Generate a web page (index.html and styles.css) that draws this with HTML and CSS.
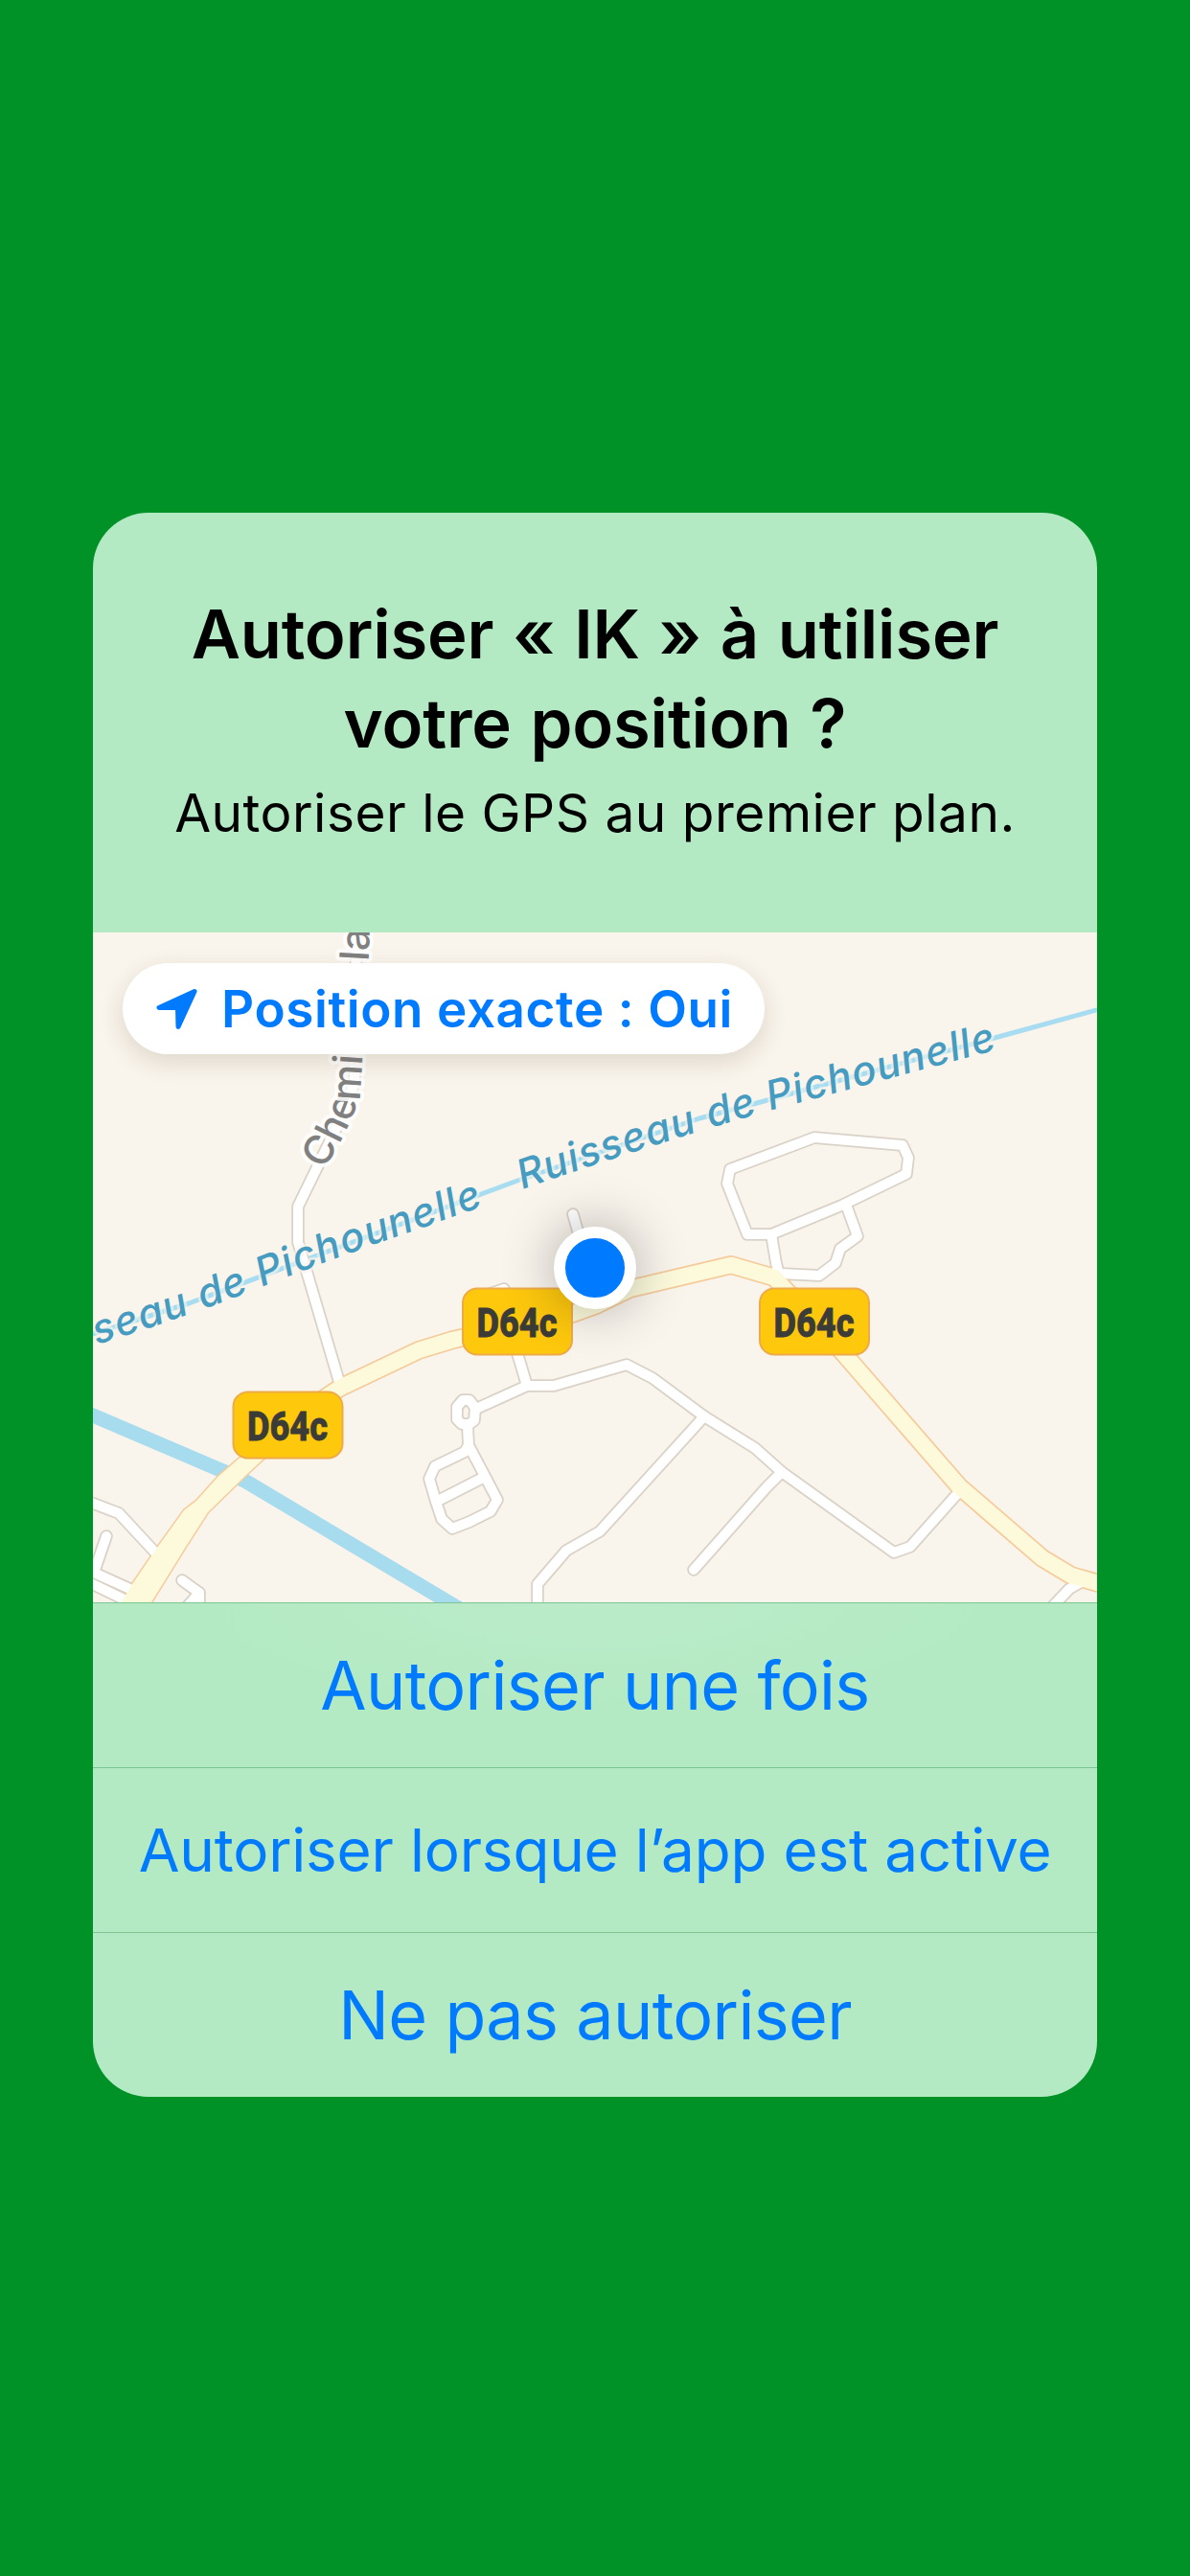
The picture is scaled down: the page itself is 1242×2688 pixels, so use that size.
FILE: index.html
```html
<!DOCTYPE html>
<html lang="fr">
<head>
    <meta charset="UTF-8">
    <meta name="viewport" content="width=device-width, initial-scale=1.0">
    <title>Autoriser la position</title>
    <link rel="stylesheet" href="styles.css">
</head>
<body>

    <div class="alert">
        <div class="message">
            <h1>Autoriser « IK » à utiliser<br>votre position ?</h1>
            <p>Autoriser le GPS au premier plan.</p>
        </div>

        <div class="map">
            <svg class="tiles" viewBox="97 973 1048 699" width="1048" height="699">
                <defs>
                    <g id="streets">
                        <path d="M372 965 L370 1130 L352 1175 L311 1259 L311 1296 L354 1442"/>
                        <path d="M850 1187 L942 1195 L948 1208 L946 1225 L878 1258 L805 1288 L780 1288 L759 1235 L762 1220 Z"/>
                        <path d="M883 1257 L895 1290 L877 1303 L872 1318 L855 1331 L815 1329"/>
                        <path d="M805 1288 L810 1318 L814 1334"/>
                        <path d="M598 1267 L604 1288 L612 1350"/>
                        <path d="M505 1352 L526 1345 L534 1392 L550 1446"/>
                        <path d="M497 1470 L550 1446 L578 1446 L654 1424 L681 1438 L735 1478 L788 1511 L816 1536 L933 1620 L950 1614 L998 1560"/>
                        <path d="M735 1478 L626 1598 L591 1618 L561 1653 L561 1680"/>
                        <path d="M816 1536 L800 1552 L724 1638"/>
                        <path d="M477 1468 L483 1461 L490 1461 L496 1469 L495 1482 L490 1486 L482 1486 L477 1481 Z"/>
                        <path d="M488 1487 L489 1508 L519 1565 L512 1577 L490 1588 L472 1595 L461 1585 L455 1567 L448 1543 L454 1530 L485 1515 L489 1508"/>
                        <path d="M457 1566 L504 1542"/>
                        <path d="M90 1566 L124 1579 L163 1621"/>
                        <path d="M111 1603 L98 1641 L140 1660"/>
                        <path d="M88 1649 L136 1672"/>
                        <path d="M190 1649 L208 1662 L208 1680"/>
                        <path d="M208 1662 L194 1678"/>
                        <path d="M1097 1678 L1116 1658 L1130 1650"/>
                    </g>
                    <path id="departmental" d="M262 1521 L300 1485 L355 1448 L437 1409 L473 1398 L597 1371 L622 1362 L657 1345 L763 1320 L808 1333 L882 1414 L1001 1551 L1088 1626 L1118 1644 L1160 1656"/>
                    <path id="departmentalWide" d="M262 1511 L228 1540.500 L205 1566 L192 1576 L164 1615 L138 1653 L122 1680 L153 1680 L192 1617 L217 1578 L257 1539 L285 1513"/>
                    <path id="streamLeft" d="M101 1403 Q190 1376 273 1343 T413 1291 L520 1253"/>
                    <path id="streamRight" d="M545 1241 Q640 1208 722 1183 T803 1159 L1060 1090"/>
                    <path id="lane" d="M338 1221 L354 1194 Q372 1160 376 1140 L379 1095 L385 995 L387 940"/>
                </defs>

                <!-- water -->
                <path class="canal" d="M90 1474 L235 1536 L257 1546 L480 1679"/>
                <path class="stream" d="M90 1394 L197 1360 L323 1313 L540 1232 L730 1167 L790 1151 L1038 1083 L1155 1051"/>

                <!-- roads, casings first -->
                <use href="#streets" class="street-case"/>
                <use href="#departmental" class="road-case"/>
                <use href="#departmentalWide" class="wide-case"/>
                <use href="#streets" class="street"/>
                <use href="#departmental" class="road"/>
                <use href="#departmentalWide" class="wide"/>

                <!-- labels -->
                <text class="water-label"><textPath href="#streamLeft" textLength="429">seau de Pichounelle</textPath></text>
                <text class="water-label"><textPath href="#streamRight" textLength="517">Ruisseau de Pichounelle</textPath></text>
                <text class="lane-label"><textPath href="#lane">Chemin de la</textPath></text>

                <g class="shield">
                    <rect x="243.500" y="1452.500" width="114" height="69" rx="15"/>
                    <text x="258" y="1502.500" textLength="84" lengthAdjust="spacingAndGlyphs">D64c</text>
                    <rect x="483" y="1344.500" width="114" height="69" rx="15"/>
                    <text x="497.500" y="1394.500" textLength="84" lengthAdjust="spacingAndGlyphs">D64c</text>
                    <rect x="793" y="1344.500" width="114" height="69" rx="15"/>
                    <text x="807.500" y="1394.500" textLength="84" lengthAdjust="spacingAndGlyphs">D64c</text>
                </g>
            </svg>

            <div class="dot"></div>

            <div class="precise">
                <svg class="arrow" viewBox="0 0 44 44" width="44" height="44">
                    <path d="M40 3.500 L3 20.500 L22.500 20.500 L23 40.500 Z"/>
                </svg>
                <span>Position exacte : Oui</span>
            </div>
        </div>

        <button class="once">Autoriser une fois</button>
        <button class="active">Autoriser lorsque l’app est active</button>
        <button class="deny">Ne pas autoriser</button>
    </div>

</body>
</html>
```
FILE: styles.css
```css
body {
    font-family: Inter, 'Liberation Sans', sans-serif;
    background-color: #009127;
    margin: 0;
    height: 2688px;
    padding-top: 535px;
    box-sizing: border-box;
}

.alert {
    width: 1048px;
    height: 1653px;
    margin: 0 auto;
    border-radius: 58px;
    background-color: #b3eac3;
    overflow: hidden;
    display: flex;
    flex-direction: column;
}

.message {
    height: 438px;
    padding-top: 80px;
    box-sizing: border-box;
    text-align: center;
    color: #000;
}

.message h1 {
    margin: 0;
    font-size: 70.5px;
    font-weight: 600;
    line-height: 93px;
    letter-spacing: -0.15px;
    word-spacing: 2px;
}

.message p {
    margin: 14px 0 0;
    font-size: 55px;
    line-height: 66px;
    letter-spacing: 0.5px;
}

.map {
    position: relative;
    height: 699px;
    background-color: #f9f4ec;
}

.tiles {
    display: block;
}

.tiles path, .tiles use {
    fill: none;
    stroke-linecap: round;
    stroke-linejoin: round;
}

.tiles #departmentalWide {
    fill: #fcfadb;
}

.canal {
    stroke: #a7dbee;
    stroke-width: 15;
}

.stream {
    stroke: #a7dcf1;
    stroke-width: 5;
}

.street-case {
    stroke: #dad2c7;
    stroke-width: 13.500;
}

.street {
    stroke: #fff;
    stroke-width: 10;
}

.road-case {
    stroke: #f6cb9c;
    stroke-width: 20;
}

.road {
    stroke: #fcfadb;
    stroke-width: 16.500;
}

.wide-case {
    stroke: #f6cb9c;
    stroke-width: 3;
}

.water-label, .lane-label {
    font-size: 42px;
    font-weight: 500;
    paint-order: stroke;
    stroke-linejoin: round;
}

.water-label {
    font-style: italic;
    font-weight: 550;
    fill: #459bc0;
    stroke: rgba(249, 244, 237, 0.65);
    stroke-width: 6;
}

.lane-label {
    fill: #808080;
    stroke: rgba(255, 255, 255, 0.85);
    stroke-width: 8;
}

.shield rect {
    fill: #fec80d;
    stroke: #eeaa48;
    stroke-width: 2;
}

.shield text {
    font-family: Roboto, sans-serif;
    font-size: 43px;
    font-weight: 800;
    fill: #3b3b38;
    stroke: #3b3b38;
    stroke-width: 0.8;
}

.dot {
    position: absolute;
    left: 481px;
    top: 307px;
    width: 62px;
    height: 62px;
    border: 12px solid #fff;
    border-radius: 50%;
    background-color: #007aff;
    box-shadow: 0 0 56px rgba(0, 0, 0, 0.3);
}

.precise {
    position: absolute;
    left: 31px;
    top: 32px;
    width: 670px;
    height: 95px;
    padding-left: 35px;
    box-sizing: border-box;
    display: flex;
    align-items: center;
    border-radius: 48px;
    background-color: #fff;
    box-shadow: 0 8px 24px rgba(80, 60, 30, 0.16);
    color: #007aff;
    font-size: 53px;
    font-weight: 580;
    letter-spacing: 0.6px;
    white-space: nowrap;
}

.arrow {
    margin-right: 24px;
}

.arrow path {
    fill: #007aff;
    stroke: #007aff;
    stroke-width: 5;
    stroke-linejoin: round;
}

button {
    flex: 1;
    padding: 0;
    border: none;
    border-top: 1px solid #7cc592;
    background: none;
    color: #007aff;
    font-family: inherit;
    font-size: 70px;
    letter-spacing: -0.65px;
}

.once {
    background: radial-gradient(ellipse 420px 110px at top, #bbebc9, #b3eac3);
}

.active {
    font-size: 62px;
    letter-spacing: -0.2px;
}
```
